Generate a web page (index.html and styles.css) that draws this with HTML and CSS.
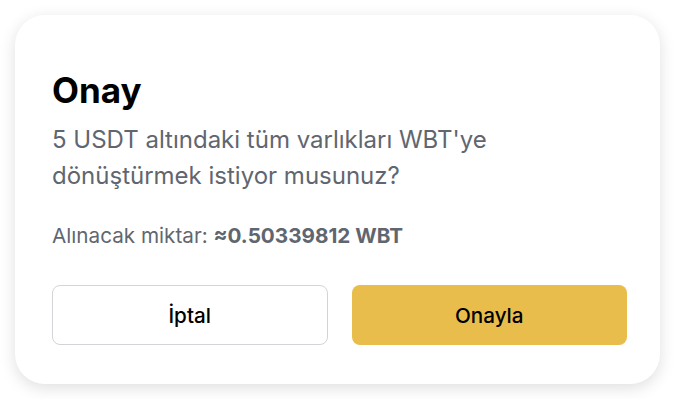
FILE: index.html
```html
<!DOCTYPE html>
<html lang="tr">
<head>
    <meta charset="UTF-8">
    <title>Onay</title>
    <link rel="stylesheet" href="styles.css">
</head>
<body>
    <div class="dialog">
        <h1 class="dialog-title">Onay</h1>
        <p class="dialog-message">5 USDT altındaki tüm varlıkları WBT'ye dönüştürmek istiyor musunuz?</p>
        <p class="dialog-amount">Alınacak miktar: <strong>≈0.50339812 WBT</strong></p>
        <div class="dialog-actions">
            <button class="btn btn-cancel">İptal</button>
            <button class="btn btn-confirm">Onayla</button>
        </div>
    </div>
</body>
</html>
```

FILE: styles.css
```css
body {
    font-family: 'Inter', 'Noto Sans', sans-serif;
    background-color: #fff;
    margin: 0;
    padding: 15px;
}

.dialog {
    background-color: #fff;
    border-radius: 30px;
    box-shadow: 0 4px 16px rgba(0, 0, 0, 0.13);
    padding: 54px 33px 39px 37px;
    height: 369px;
    box-sizing: border-box;
}

.dialog-title {
    font-size: 35px;
    line-height: 42px;
    font-weight: 700;
    color: #000;
    margin: 0;
}

.dialog-message {
    font-size: 24px;
    line-height: 36px;
    color: #5f6670;
    margin: 11px 0 0;
    max-width: 460px;
}

.dialog-amount {
    font-size: 20.7px;
    line-height: 28px;
    color: #5f6670;
    margin: 28px 0 0;
}

.dialog-amount strong {
    font-weight: 700;
}

.dialog-actions {
    display: grid;
    grid-template-columns: 1fr 1fr;
    gap: 24px;
    margin-top: 35px;
}

.btn {
    height: 60px;
    border-radius: 8px;
    font-family: inherit;
    font-size: 20.7px;
    font-weight: 500;
    color: #000;
    cursor: pointer;
}

.btn-cancel {
    background-color: #fff;
    border: 1px solid #d4d4d8;
}

.btn-confirm {
    background-color: #e9bd4c;
    border: none;
}
```
